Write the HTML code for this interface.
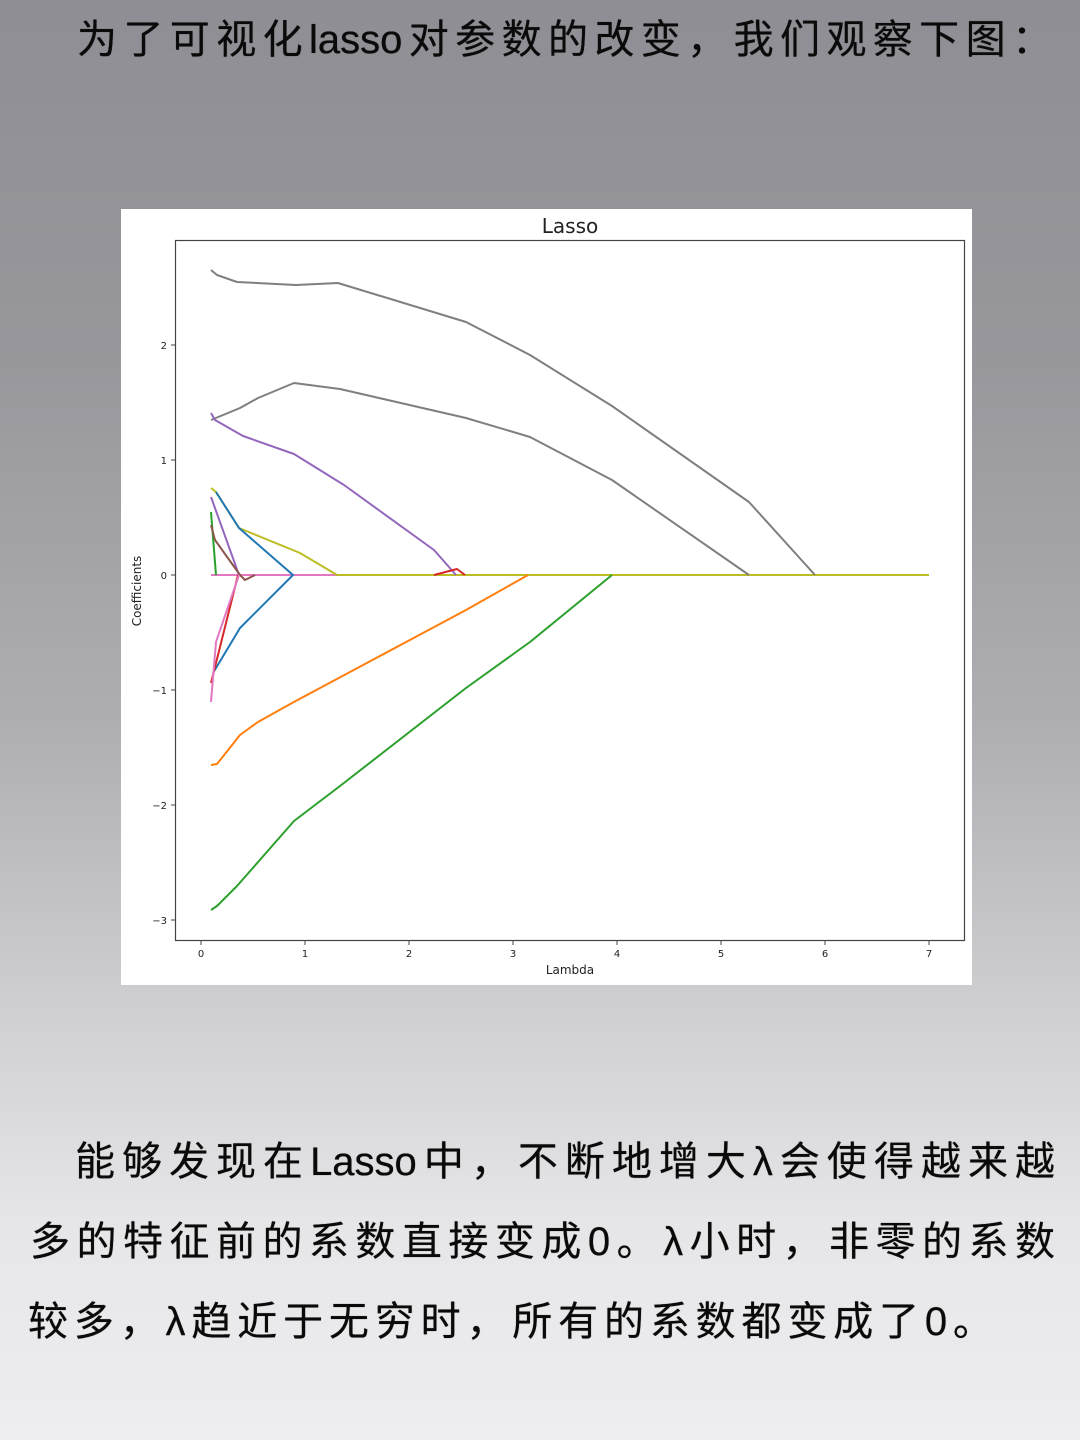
<!DOCTYPE html>
<html><head><meta charset="utf-8"><style>
html,body{margin:0;padding:0}
body{width:1080px;height:1440px;position:relative;overflow:hidden;
background:linear-gradient(180deg,#8e8e94 0%,#97979c 25%,#aeaeb2 50%,#cfcfd2 70%,#e6e6e8 85%,#eeeef0 100%);
font-family:"Liberation Sans","Noto Sans CJK SC",sans-serif;color:#111}
.ln{position:absolute;font-size:40px;line-height:50px;text-align:justify;text-align-last:justify;white-space:nowrap;font-family:"Liberation Sans","WenQuanYi Zen Hei","Noto Sans CJK SC",sans-serif;color:#0a0a0a;text-shadow:0 0 0.6px #000}
svg{position:absolute;left:0;top:0}
</style></head><body>
<div class="ln" style="left:77px;top:15px;width:975px">为了可视化lasso对参数的改变，我们观察下图：</div>
<svg width="1080" height="1440" viewBox="0 0 1080 1440">
<rect x="121" y="209" width="851" height="776" fill="#fff"/>
<rect x="175.5" y="240.5" width="789" height="700" fill="none" stroke="#444" stroke-width="1.2"/>
<g fill="none" stroke-width="2" stroke-linejoin="round">
<polyline stroke="#e377c2" points="211,575 337,575"/>
<polyline stroke="#bcbd22" points="337,575 929,575"/>
<polyline stroke="#7f7f7f" points="211,270 217,275 237,282 296,285 338,283 466,322 530,355 612,406 749,502 815,575"/>
<polyline stroke="#7f7f7f" points="211,420 240,408 258,398 294,383 340,389 466,418 530,437 612,480 749,575"/>
<polyline stroke="#9467bd" points="211,413 215,420 243,436 294,454 344,485 434,550 456,575"/>
<polyline stroke="#bcbd22" points="211,488 216,492 239,528 300,553 337,575"/>
<polyline stroke="#1f77b4" points="216,492 239,528 293,575 240,628 213,673"/>
<polyline stroke="#9467bd" points="211,497 239,575"/>
<polyline stroke="#2ca02c" points="211,512 216,575"/>
<polyline stroke="#8c564b" points="211,525 215,540 240,575 245,580 255,575"/>
<polyline stroke="#d62728" points="211,683 238,575"/>
<polyline stroke="#d62728" points="434,575 457,569 465,575"/>
<polyline stroke="#e377c2" points="211,702 216,642 239,575"/>
<polyline stroke="#ff7f0e" points="211,765 217,764 240,735 258,722 292,703 466,610 528,575"/>
<polyline stroke="#2ca02c" points="211,910 217,906 237,886 294,821 340,786 466,688 530,642 612,575"/>
</g>
<g stroke="#444" stroke-width="1">
<line x1="171" y1="345" x2="175" y2="345"/><line x1="171" y1="460" x2="175" y2="460"/><line x1="171" y1="575" x2="175" y2="575"/><line x1="171" y1="690" x2="175" y2="690"/><line x1="171" y1="805" x2="175" y2="805"/><line x1="171" y1="920" x2="175" y2="920"/>
<line x1="201" y1="941" x2="201" y2="945"/><line x1="305" y1="941" x2="305" y2="945"/><line x1="409" y1="941" x2="409" y2="945"/><line x1="513" y1="941" x2="513" y2="945"/><line x1="617" y1="941" x2="617" y2="945"/><line x1="721" y1="941" x2="721" y2="945"/><line x1="825" y1="941" x2="825" y2="945"/><line x1="929" y1="941" x2="929" y2="945"/>
</g>
<g font-family="DejaVu Sans,sans-serif" font-size="10" fill="#222" text-anchor="end">
<text x="167" y="349">2</text><text x="167" y="464">1</text><text x="167" y="579">0</text><text x="167" y="694">−1</text><text x="167" y="809">−2</text><text x="167" y="924">−3</text>
</g>
<g font-family="DejaVu Sans,sans-serif" font-size="10" fill="#222" text-anchor="middle">
<text x="201" y="957">0</text><text x="305" y="957">1</text><text x="409" y="957">2</text><text x="513" y="957">3</text><text x="617" y="957">4</text><text x="721" y="957">5</text><text x="825" y="957">6</text><text x="929" y="957">7</text>
<text x="570" y="974" font-size="12">Lambda</text>
<text x="141" y="591" font-size="12" transform="rotate(-90 141 591)">Coefficients</text>
<text x="570" y="233" font-size="20">Lasso</text>
</g>
</svg>
<div class="ln" style="left:75px;top:1137px;width:980px">能够发现在Lasso中，不断地增大λ会使得越来越</div>
<div class="ln" style="left:30px;top:1217px;width:1025px">多的特征前的系数直接变成0。λ小时，非零的系数</div>
<div class="ln" style="left:28px;top:1297px;width:965px">较多，λ趋近于无穷时，所有的系数都变成了0。</div>
</body></html>
